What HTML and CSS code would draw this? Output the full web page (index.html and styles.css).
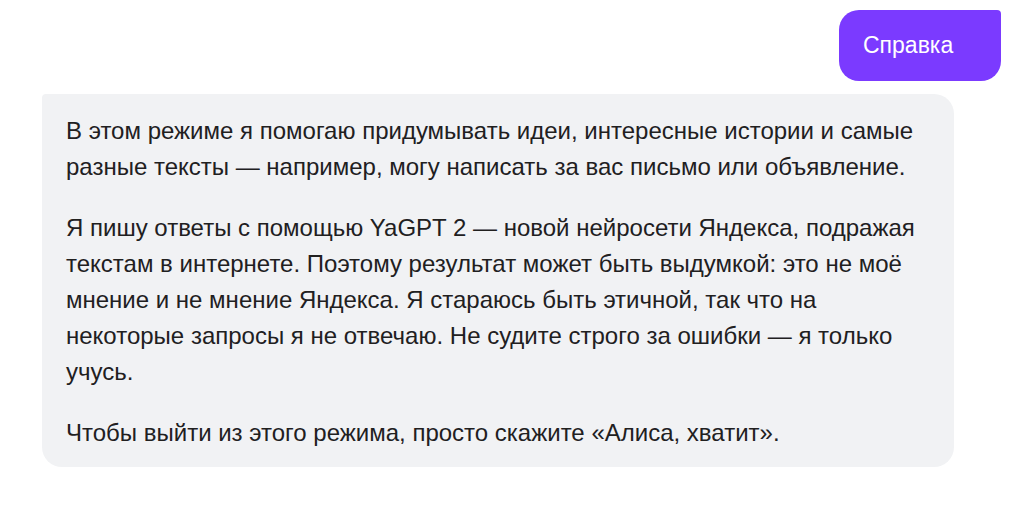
FILE: index.html
```
<html>
<head>
<meta charset="UTF-8">
<title>Алиса</title>
<link rel="stylesheet" href="styles.css">
</head>
<body>

  <div class="chat">

    <div class="row row-user">
      <div class="msg user">Справка</div>
    </div>

    <div class="row row-bot">
      <div class="msg bot">
        <p>В этом режиме я помогаю придумывать идеи, интересные истории и самые разные тексты — например, могу написать за вас письмо или объявление.</p>
        <p>Я пишу ответы с помощью YaGPT 2 — новой нейросети Яндекса, подражая текстам в интернете. Поэтому результат может быть выдумкой: это не моё мнение и не мнение Яндекса. Я стараюсь быть этичной, так что на некоторые запросы я не отвечаю. Не судите строго за ошибки — я только учусь.</p>
        <p>Чтобы выйти из этого режима, просто скажите «Алиса, хватит».</p>
      </div>
    </div>

  </div>

</body>
</html>
```

FILE: styles.css
```
body
{
  margin : 0;
  background : #FFF;
  font-family : "Liberation Sans", Arial, sans-serif;
  color : #21201F;
}

.chat
{
  display : flex;
  flex-direction : column;
  gap : 13px;
  padding : 10px 19px 0 42px;
}

.row
{
  display : flex;
}

.row-user
{
  justify-content : flex-end;
}

.msg
{
  box-sizing : border-box;
}

.user
{
  width : 162px;
  height : 71px;
  padding : 0 24px;
  display : flex;
  align-items : center;
  font-size : 23px;
  background : #7B3AFF;
  color : #FFF;
  border-radius : 20px 4px 20px 20px;
}

.bot
{
  width : 912px;
  padding : 19px 24px 16px 24px;
  background : #F1F2F4;
  border-radius : 4px 20px 20px 20px;
  font-size : 24px;
  line-height : 36px;
}

.bot p
{
  margin : 0;
}

.bot p + p
{
  margin-top : 25px;
}
```
